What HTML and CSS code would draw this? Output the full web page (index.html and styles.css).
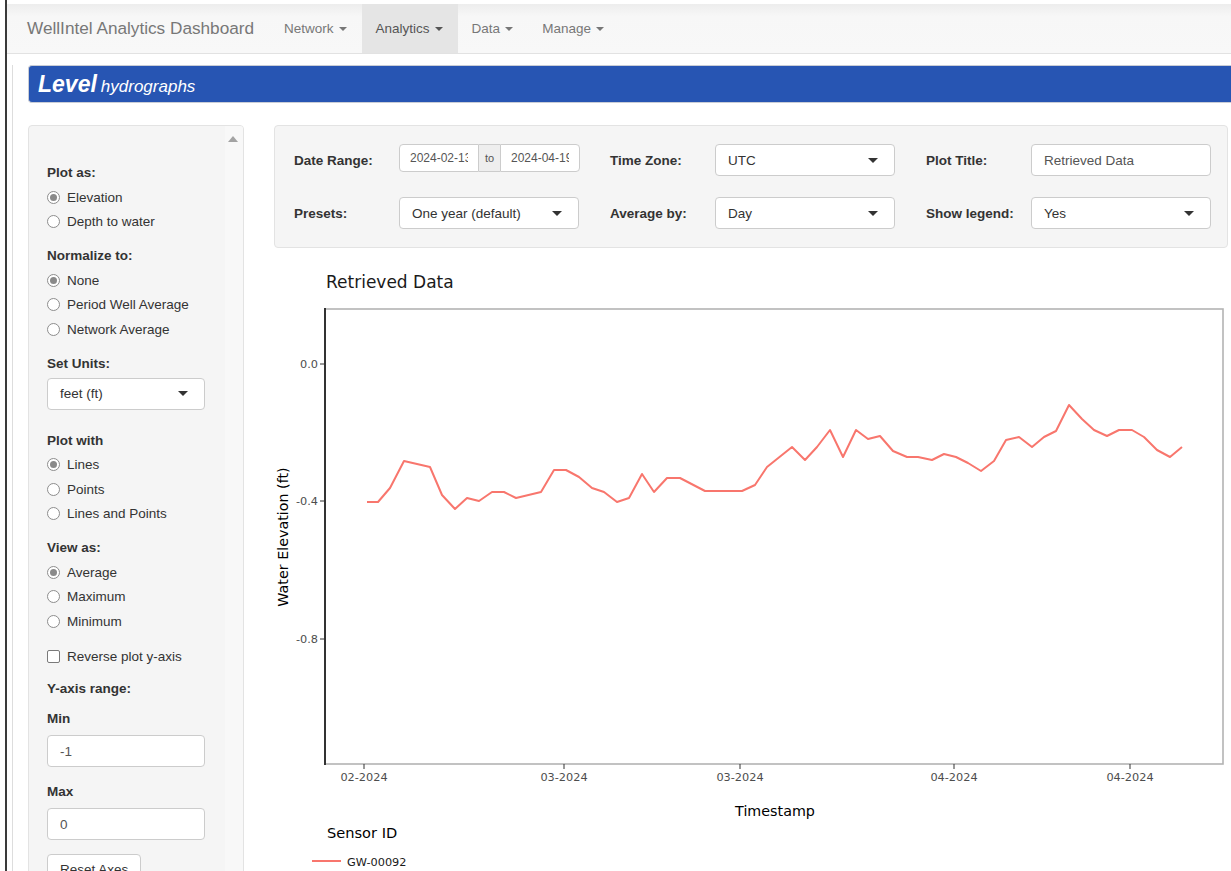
FILE: index.html
```html
<!DOCTYPE html>
<html lang="en">
<head>
<meta charset="utf-8">
<title>WellIntel Analytics Dashboard</title>
<link rel="stylesheet" href="styles.css">
</head>
<body>
<div class="window">
  <nav class="navbar">
    <span class="brand">WellIntel Analytics Dashboard</span>
    <ul class="nav">
      <li class="nav-item">Network <b class="caret"></b></li>
      <li class="nav-item active">Analytics <b class="caret"></b></li>
      <li class="nav-item">Data <b class="caret"></b></li>
      <li class="nav-item">Manage <b class="caret"></b></li>
    </ul>
  </nav>

  <div class="page">
    <div class="title-bar"><span class="title-main">Level</span> <span class="title-sub">hydrographs</span></div>

    <div class="layout">
      <aside class="sidebar">
        <div class="sidebar-body">
          <div class="group">
            <div class="control-label">Plot as:</div>
            <div class="radio"><span class="radio-dot checked"></span>Elevation</div>
            <div class="radio"><span class="radio-dot"></span>Depth to water</div>
          </div>
          <div class="group">
            <div class="control-label">Normalize to:</div>
            <div class="radio"><span class="radio-dot checked"></span>None</div>
            <div class="radio"><span class="radio-dot"></span>Period Well Average</div>
            <div class="radio"><span class="radio-dot"></span>Network Average</div>
          </div>
          <div class="group group-select">
            <div class="control-label">Set Units:</div>
            <div class="select side-select"><span>feet (ft)</span><span class="select-caret"></span></div>
          </div>
          <div class="group">
            <div class="control-label">Plot with</div>
            <div class="radio"><span class="radio-dot checked"></span>Lines</div>
            <div class="radio"><span class="radio-dot"></span>Points</div>
            <div class="radio"><span class="radio-dot"></span>Lines and Points</div>
          </div>
          <div class="group">
            <div class="control-label">View as:</div>
            <div class="radio"><span class="radio-dot checked"></span>Average</div>
            <div class="radio"><span class="radio-dot"></span>Maximum</div>
            <div class="radio"><span class="radio-dot"></span>Minimum</div>
          </div>
          <div class="checkbox"><span class="check-box"></span>Reverse plot y-axis</div>
          <div class="control-label range-title">Y-axis range:</div>
          <div class="control-label small-title">Min</div>
          <input class="text-input side-input" type="text" value="-1" readonly>
          <div class="control-label small-title max-title">Max</div>
          <input class="text-input side-input" type="text" value="0" readonly>
          <button class="btn" type="button">Reset Axes</button>
        </div>
        <div class="scroll-track"><span class="scroll-arrow"></span></div>
      </aside>

      <main class="content">
        <div class="filters">
          <div class="field">
            <span class="field-label">Date Range:</span>
            <div class="date-range">
              <input class="date-input" type="text" value="2024-02-13" readonly>
              <span class="date-addon">to</span>
              <input class="date-input" type="text" value="2024-04-19" readonly>
            </div>
          </div>
          <div class="field">
            <span class="field-label">Time Zone:</span>
            <div class="select"><span>UTC</span><span class="select-caret"></span></div>
          </div>
          <div class="field">
            <span class="field-label">Plot Title:</span>
            <input class="text-input title-input" type="text" value="Retrieved Data" readonly>
          </div>
          <div class="field">
            <span class="field-label">Presets:</span>
            <div class="select"><span>One year (default)</span><span class="select-caret"></span></div>
          </div>
          <div class="field">
            <span class="field-label">Average by:</span>
            <div class="select"><span>Day</span><span class="select-caret"></span></div>
          </div>
          <div class="field">
            <span class="field-label">Show legend:</span>
            <div class="select"><span>Yes</span><span class="select-caret"></span></div>
          </div>
        </div>

        <div class="plot">
          <svg class="plot-svg" width="957" height="613" viewBox="0 0 957 613" xmlns="http://www.w3.org/2000/svg">
            <g transform="translate(-274,-258)">
              <text class="plot-title" x="326" y="287">Retrieved Data</text>

              <!-- panel frame -->
              <rect x="325" y="308" width="898" height="455" fill="#fff" stroke="#b3b3b3" stroke-width="1.6"/>
              <line x1="325" y1="307" x2="325" y2="764" stroke="#333" stroke-width="2"/>

              <!-- y axis -->
              <g stroke="#333" stroke-width="1">
                <line x1="320" y1="363" x2="325" y2="363"/>
                <line x1="320" y1="500" x2="325" y2="500"/>
                <line x1="320" y1="638" x2="325" y2="638"/>
              </g>
              <g class="tick-label" text-anchor="end">
                <text x="318" y="367">0.0</text>
                <text x="318" y="504">-0.4</text>
                <text x="318" y="642">-0.8</text>
              </g>

              <!-- x axis -->
              <g stroke="#333" stroke-width="1">
                <line x1="364" y1="763" x2="364" y2="768"/>
                <line x1="564" y1="763" x2="564" y2="768"/>
                <line x1="740" y1="763" x2="740" y2="768"/>
                <line x1="954" y1="763" x2="954" y2="768"/>
                <line x1="1130" y1="763" x2="1130" y2="768"/>
              </g>
              <g class="tick-label" text-anchor="middle">
                <text x="364" y="780">02-2024</text>
                <text x="564" y="780">03-2024</text>
                <text x="740" y="780">03-2024</text>
                <text x="954" y="780">04-2024</text>
                <text x="1130" y="780">04-2024</text>
              </g>

              <text class="axis-title" x="775" y="815" text-anchor="middle">Timestamp</text>
              <text class="axis-title" x="288" y="536" text-anchor="middle" transform="rotate(-90 288 536)">Water Elevation (ft)</text>

              <!-- series -->
              <polyline fill="none" stroke="#f8766d" stroke-width="2" stroke-linejoin="round"
                points="367,501 378,501 390,487 404,460 430,466 442,494 455,508 467,497 479,500 492,491 504,491 516,497 541,491 554,469 566,469 579,476 592,487 604,491 617,501 629,497 642,473 654,491 667,477 680,477 705,490 742,490 755,484 767,466 792,446 805,459 817,446 830,429 843,456 856,429 868,438 880,435 893,450 907,456 918,456 932,459 944,453 956,456 968,462 981,470 994,460 1006,439 1019,436 1032,446 1044,436 1056,430 1069,404 1082,418 1094,429 1107,435 1119,429 1132,429 1144,436 1157,449 1170,456 1182,446"/>

              <!-- legend -->
              <text class="legend-title" x="327" y="837">Sensor ID</text>
              <line x1="312" y1="860" x2="341" y2="860" stroke="#f8766d" stroke-width="2"/>
              <text class="legend-label" x="347" y="865">GW-00092</text>
            </g>
          </svg>
        </div>
      </main>
    </div>
  </div>
</div>
</body>
</html>
```

FILE: styles.css
```css
html, body {
  margin: 0;
  height: 871px;
  overflow: hidden;
  background: #fff;
}

body {
  font-family: "Liberation Sans", Arial, sans-serif;
  font-size: 13.5px;
  color: #333;
}

.window {
  margin-left: 5px;
  border-left: 2px solid #3a3a3a;
  height: 871px;
  padding-top: 4px;
  box-sizing: border-box;
  overflow: hidden;
}

/* top navigation */
.navbar {
  height: 49px;
  display: flex;
  align-items: center;
  background: linear-gradient(#ededed, #f7f7f7 25%, #f8f8f8);
  border-bottom: 1px solid #e2e2e2;
}

.brand {
  font-size: 17.2px;
  color: #777;
  padding-left: 20px;
  margin-right: 16px;
}

.nav {
  display: flex;
  height: 100%;
  margin: 0;
  padding: 0;
  list-style: none;
}

.nav-item {
  display: flex;
  align-items: center;
  padding: 0 15px 0 14px;
  font-size: 13.5px;
  color: #777;
}

.nav-item.active {
  background: #e5e5e5;
  color: #555;
}

.caret {
  display: inline-block;
  width: 0;
  height: 0;
  margin-left: 5px;
  border-top: 4px solid;
  border-left: 4px solid transparent;
  border-right: 4px solid transparent;
}

/* page body */
.page {
  margin-left: 5px;
  border-left: 1px solid #ddd;
  padding-left: 15px;
  height: 100%;
}

.title-bar {
  margin-top: 11px;
  margin-right: -12px;
  height: 36px;
  background: #2755b3;
  border: 1px solid #c9cdd6;
  border-right: none;
  border-radius: 4px 0 0 4px;
  color: #fff;
  display: flex;
  align-items: baseline;
  padding-left: 9px;
  line-height: 37px;
}

.title-main {
  font-size: 23px;
  font-weight: bold;
  font-style: italic;
  margin-right: 4px;
}

.title-sub {
  font-size: 17px;
  font-style: italic;
}

.layout {
  display: flex;
  gap: 30px;
  margin-top: 22px;
}

/* sidebar */
.sidebar {
  position: relative;
  width: 216px;
  height: 780px;
  flex: none;
  box-sizing: border-box;
  background: #f5f5f5;
  border: 1px solid #e3e3e3;
  border-radius: 4px;
  overflow: hidden;
}

.sidebar-body {
  padding: 37px 0 0 18px;
  display: flex;
  flex-direction: column;
  align-items: flex-start;
}

.scroll-track {
  position: absolute;
  top: 0;
  right: 0;
  bottom: 0;
  width: 18px;
  background: #f8f8f8;
}

.scroll-arrow {
  position: absolute;
  top: 10px;
  left: 3px;
  width: 0;
  height: 0;
  border-bottom: 6px solid #a3a3a3;
  border-left: 5px solid transparent;
  border-right: 5px solid transparent;
}

.group {
  margin-bottom: 12px;
}

.group-select {
  margin-bottom: 21px;
}

.control-label {
  font-weight: bold;
  height: 20px;
  line-height: 20px;
  margin-bottom: 2px;
}

.radio,
.checkbox {
  display: flex;
  align-items: center;
  height: 24.5px;
}

.radio-dot {
  position: relative;
  width: 11px;
  height: 11px;
  border: 1px solid #8d8d8d;
  border-radius: 50%;
  background: #fff;
  margin-right: 7px;
}

.radio-dot.checked::after {
  content: "";
  position: absolute;
  left: 2px;
  top: 2px;
  width: 7px;
  height: 7px;
  border-radius: 50%;
  background: #8a8a8a;
}

.checkbox {
  margin-top: -1px;
}

.check-box {
  width: 11px;
  height: 11px;
  border: 1px solid #7a7a7a;
  border-radius: 2px;
  background: #fff;
  margin-right: 7px;
}

.range-title {
  margin-top: 10px;
  margin-bottom: 0;
}

.small-title {
  margin-top: 10px;
  margin-bottom: 6px;
}

.max-title {
  margin-top: 15px;
}

.group-select .control-label {
  margin-bottom: 4px;
}

.select {
  display: flex;
  align-items: center;
  justify-content: space-between;
  box-sizing: border-box;
  height: 32px;
  padding: 0 16px 0 12px;
  background: #fff;
  border: 1px solid #ccc;
  border-radius: 4px;
  color: #333;
}

.side-select {
  width: 158px;
}

.select-caret {
  width: 0;
  height: 0;
  border-top: 5px solid #333;
  border-left: 5px solid transparent;
  border-right: 5px solid transparent;
}

.text-input {
  box-sizing: border-box;
  height: 32px;
  padding: 0 12px;
  font-family: inherit;
  font-size: 13.5px;
  color: #555;
  background: #fff;
  border: 1px solid #ccc;
  border-radius: 4px;
  outline: none;
}

.side-input {
  width: 158px;
}

.btn {
  margin-top: 14px;
  height: 30px;
  padding: 0 12px;
  font-family: inherit;
  font-size: 13.5px;
  color: #333;
  background: #fff;
  border: 1px solid #ccc;
  border-radius: 4px;
}

/* filter panel */
.content {
  flex: 1;
  padding-right: 3px;
}

.filters {
  box-sizing: border-box;
  width: 954px;
  height: 123px;
  padding: 18px 18px 18px 19px;
  background: #f5f5f5;
  border: 1px solid #e3e3e3;
  border-radius: 4px;
  display: grid;
  grid-template-columns: repeat(3, 285px);
  column-gap: 31px;
  row-gap: 21px;
}

.field {
  display: flex;
  align-items: center;
  height: 32px;
}

.field-label {
  width: 105px;
  flex: none;
  font-weight: bold;
}

.field .select,
.title-input {
  width: 180px;
}

.date-range {
  display: flex;
  align-self: flex-start;
  height: 28px;
  width: 181px;
}

.date-input {
  box-sizing: border-box;
  width: 80px;
  height: 28px;
  padding: 0 10px;
  font-family: inherit;
  font-size: 12px;
  color: #555;
  background: #fff;
  border: 1px solid #ccc;
  outline: none;
}

.date-input:first-child {
  border-radius: 4px 0 0 4px;
}

.date-input:last-child {
  border-radius: 0 4px 4px 0;
}

.date-addon {
  width: 21px;
  box-sizing: border-box;
  display: flex;
  align-items: center;
  justify-content: center;
  font-size: 11px;
  color: #555;
  background: #eee;
  border-top: 1px solid #ccc;
  border-bottom: 1px solid #ccc;
}

/* chart */
.plot {
  margin-top: 11px;
}

.plot-svg {
  display: block;
  overflow: visible;
  font-family: "DejaVu Sans", Verdana, sans-serif;
}

.plot-title {
  font-size: 17px;
  fill: #1a1a1a;
}

.tick-label {
  font-size: 11.3px;
  fill: #4d4d4d;
}

.axis-title {
  font-size: 14.3px;
  fill: #000;
}

.legend-title {
  font-size: 14.6px;
  fill: #000;
}

.legend-label {
  font-size: 11.3px;
  fill: #1a1a1a;
}
```
